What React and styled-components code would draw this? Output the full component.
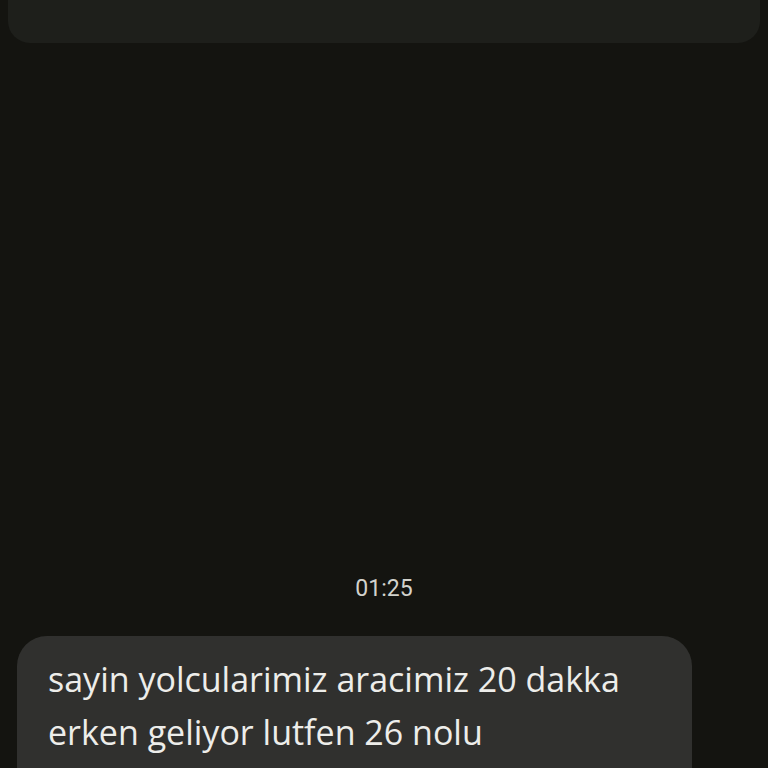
import React from "react";
import styled, { createGlobalStyle } from "styled-components";

const Global = createGlobalStyle`
  html, body { margin: 0; padding: 0; background: #141410; }
  body { font-family: Roboto, "Noto Sans", sans-serif; }
`;

const Page = styled.div`
  width: 768px;
  height: 768px;
  overflow: hidden;
  background: #141410;
  display: flex;
  flex-direction: column;
`;

const TopCard = styled.div`
  margin: 0 8px;
  height: 43px;
  flex: none;
  background: #1e1f1b;
  border-radius: 0 0 22px 22px;
`;

const Timestamp = styled.div`
  margin-top: 531px;
  height: 30px;
  line-height: 30px;
  text-align: center;
  font-size: 23px;
  color: #d2d2cc;
  flex: none;
`;

const Bubble = styled.div`
  margin: 32px 76px 0 17px;
  padding: 17px 24px 40px 31px;
  background: #30302e;
  border-radius: 30px;
  color: #ededea;
  font-family: "Open Sans", Roboto, sans-serif;
  font-size: 34px;
  line-height: 53px;
  flex: none;
`;

export default function App() {
  return (
    <Page>
      <Global />
      <TopCard />
      <Timestamp>01:25</Timestamp>
      <Bubble>
        sayin yolcularimiz aracimiz 20 dakka
        <br />
        erken geliyor lutfen 26 nolu
      </Bubble>
    </Page>
  );
}
